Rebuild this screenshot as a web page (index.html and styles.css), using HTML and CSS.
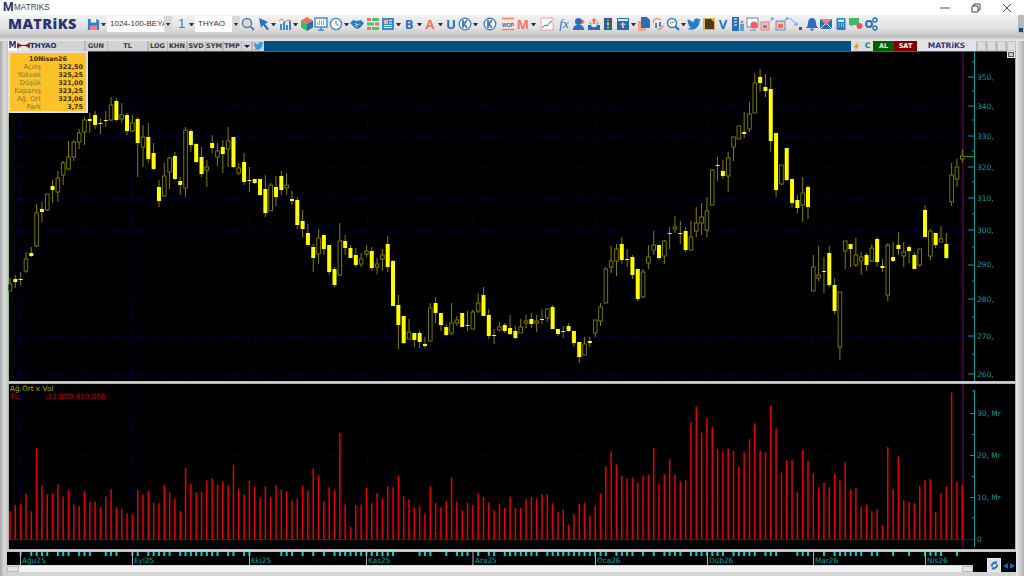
FILE: index.html
```html
<!DOCTYPE html>
<html lang="tr">
<head>
<meta charset="utf-8">
<title>MATRIKS</title>
<link rel="stylesheet" href="styles.css">
</head>
<body>
<header class="titlebar">
  <span class="app-m">M</span>
  <span class="app-name">MATRIKS</span>
  <div class="winbtns">
    <svg viewBox="0 0 10 10"><path d="M0 5h10" stroke="#555" fill="none"/></svg>
    <svg viewBox="0 0 10 10"><path d="M1 3h6v6H1zM3 3V1h6v6H7" stroke="#444" fill="none"/></svg>
    <svg viewBox="0 0 10 10"><path d="M1 1l8 8M9 1l-8 8" stroke="#444" fill="none"/></svg>
  </div>
</header>

<nav class="toolbar">
  <span class="logo">MATRiKS</span>
  <svg class="ti save" viewBox="0 0 14 14"><path d="M1 1h10l2 2v10H1z" fill="#2a7fd0"/><rect x="4" y="1" width="6" height="4" fill="#e9eef5"/><rect x="3" y="8" width="8" height="5" fill="#f08080"/></svg>
  <i class="dd m1"></i>
  <div class="combo wide"><span>1024-100-BEYA</span><b></b></div>
  <span class="one">1</span>
  <i class="dd m3"></i>
  <div class="combo sym"><span>THYAO</span><b></b></div>

  <svg class="ti m1" viewBox="0 0 14 14"><circle cx="6" cy="6" r="4.6" fill="#f6cfc4" stroke="#3a8ad0" stroke-width="1.5"/><path d="M9.5 9.5l3.5 3.5" stroke="#3a8ad0" stroke-width="2"/></svg>
  <svg class="ti m2" viewBox="0 0 14 14"><path d="M2 1l9 4-3 2 4 5-2 1-4-5-2 3z" fill="#2a6fb8"/></svg>
  <i class="dd m0"></i>
  <svg class="ti m2" viewBox="0 0 14 14"><path d="M2 13V7h2v6zM5 13V5h2v8zM8 13V8h2v5zM11 13V4h2v9z" fill="#3a8ad0"/><path d="M1 4l3-2 3 3 3-2 3 1" stroke="#e87060" fill="none"/></svg>
  <i class="dd m1"></i>
  <svg class="ti m2" viewBox="0 0 14 14"><path d="M7 0l6 3.5L7 7 1 3.5z" fill="#f0705a"/><path d="M1 3.5L7 7v7l-6-3.5z" fill="#3ab870"/><path d="M13 3.5L7 7v7l6-3.5z" fill="#2a6fb8"/></svg>
  <svg class="ti m0" viewBox="0 0 14 14"><rect x="1" y="1" width="12" height="9" fill="#fff" stroke="#3a8ad0" stroke-width="1.4"/><path d="M3 8V5h1v3zM5 8V3h1v5zM7 8V4h1v4zM9 8V3h1v5z" fill="#f09050"/><path d="M7 10v3M4 13h6" stroke="#3a8ad0" stroke-width="1.4"/></svg>
  <svg class="ti m1" viewBox="0 0 14 14"><circle cx="7" cy="7" r="5.6" fill="#fff" stroke="#3a8ad0" stroke-width="1.4"/><path d="M7 3.5V7l2.5 1.5" stroke="#3a8ad0" fill="none"/></svg>
  <i class="dd m1"></i>
  <svg class="ti m1" viewBox="0 0 14 14"><path d="M0 6l3-3 4 1 4-1 3 3-3 4-3 2-3-1-3-3z" fill="#2a7fc0"/><path d="M5 6l2 2 2-1M5 8l2 2" stroke="#cfe4f5" fill="none"/></svg>
  <svg class="ti m2" viewBox="0 0 14 14"><rect x="1" y="1" width="4" height="3" fill="#f07060"/><rect x="6" y="1" width="7" height="3" fill="#40c878"/><rect x="1" y="5.5" width="7" height="3" fill="#40c878"/><rect x="9" y="5.5" width="4" height="3" fill="#f07060"/><rect x="1" y="10" width="4" height="3" fill="#f07060"/><rect x="6" y="10" width="7" height="3" fill="#40c878"/></svg>
  <svg class="ti m1" viewBox="0 0 14 14"><rect x="1" y="1" width="12" height="12" fill="#3a8ad0"/><rect x="3" y="3" width="4" height="4" fill="#f6b0a0"/><path d="M8 3.5h3M8 6h3M3 8.500h8M3 10.500h8" stroke="#dcebf8"/></svg>
  <i class="dd m1"></i>
  <span class="tg blue m1">B</span>
  <i class="dd m1"></i>
  <span class="tg salmon m1">A</span>
  <i class="dd m1"></i>
  <span class="tg blue m1">U</span>
  <svg class="ti m0" viewBox="0 0 14 14"><circle cx="7" cy="7" r="5.8" fill="#fff" stroke="#3a78b8" stroke-width="1.3"/><path d="M5 3v8M9 3L6 7l3 4" stroke="#3a78b8" stroke-width="1.8" fill="none"/></svg>
  <i class="dd m1"></i>
  <svg class="ti m5" viewBox="0 0 14 14"><circle cx="7" cy="7" r="5.8" fill="#fff" stroke="#3a78b8" stroke-width="1.3"/><path d="M5 3v8M9 3L6 7l3 4" stroke="#3a78b8" stroke-width="1.8" fill="none"/></svg>
  <svg class="ti m4" viewBox="0 0 14 14"><rect x="1" y="1" width="12" height="12" fill="#fbe6e2"/><path d="M1 1.500h12M1 12.500h12" stroke="#f08070" stroke-width="1.400"/><text class="wop" x="7" y="9.500" text-anchor="middle">WOP</text></svg>
  <span class="tg salmon m1">M</span>
  <i class="dd m1"></i>
  <svg class="ti m4" viewBox="0 0 14 14"><rect x="1" y="1" width="12" height="12" fill="#fff" stroke="#f0a098"/><path d="M2 11l3-3 2 1 3-4 2-1" stroke="#2a7fc0" fill="none"/></svg>
  <span class="tg fx m3">fx</span>
  <svg class="ti m1" viewBox="0 0 14 14"><circle cx="6.500" cy="4.500" r="3.500" fill="#2a6fb8"/><path d="M1 13c0-4 2-5 5.500-5S12 9 12 13z" fill="#2a6fb8"/><path d="M10 2l3 3-3 2z" fill="#f07060"/></svg>
  <svg class="ti m1" viewBox="0 0 14 14"><path d="M1 8h3l1 2h4l1-2h3v5H1z" fill="#2a6fb8"/><path d="M7 1l3 3H8v3H6V4H4z" fill="#f07060"/><path d="M3 4v3h2M11 4v3H9" stroke="#40c878" fill="none"/></svg>
  <svg class="ti m0" viewBox="0 0 14 14"><rect x="3" y="1" width="8" height="12" fill="#1f5f9f"/><circle cx="7" cy="3.500" r="1.400" fill="#f05050"/><circle cx="7" cy="7" r="1.400" fill="#f5c020"/><circle cx="7" cy="10.500" r="1.400" fill="#40c060"/></svg>
  <svg class="ti m1" viewBox="0 0 14 14"><rect x="1" y="1" width="12" height="12" fill="#1f6fb0"/><rect x="2" y="2" width="10" height="2" fill="#dcebf8"/><path d="M7 5l3 3H8v3H6V8H4z" fill="#f6b0a0"/></svg>
  <i class="dd m1"></i>
  <svg class="ti m1" viewBox="0 0 14 14"><path d="M1 4h8v10H1z" fill="#f6a090"/><path d="M4 0h6l3 3v8H4z" fill="#2a6fb8"/></svg>
  <svg class="ti m0" viewBox="0 0 14 14"><path d="M2 6c0-3 3-5 6-4l2 1M12 8c0 3-3 5-6 4" stroke="#f08070" stroke-width="1.300" fill="none"/><path d="M5 6v5M9 5v5" stroke="#2a6fb8" stroke-width="1.600"/></svg>
  <svg class="ti m1" viewBox="0 0 14 14"><circle cx="6" cy="6" r="4.500" fill="#fff" stroke="#2a7fc0" stroke-width="1.500"/><path d="M4 7l1.500-2L7 6l2-2" stroke="#e08050" fill="none"/><path d="M9.500 9.500l3.500 3.500" stroke="#2a6fb8" stroke-width="2"/></svg>
  <i class="dd m1"></i>
  <svg class="ti m1" viewBox="0 0 24 24"><path fill="#2a7fc8" d="M23.950 4.570a10 10 0 01-2.820.770 4.960 4.960 0 002.160-2.720c-.950.550-2 .950-3.120 1.180a4.920 4.920 0 00-8.380 4.480C7.690 8.090 4.070 6.130 1.640 3.160a4.900 4.900 0 00-.660 2.470c0 1.710.870 3.210 2.190 4.100a4.900 4.900 0 01-2.230-.610v.060a4.920 4.920 0 003.950 4.830 5 5 0 01-2.210.080 4.940 4.940 0 004.600 3.420A9.870 9.870 0 010 19.540a14 14 0 007.560 2.210c9.050 0 14-7.500 14-13.980 0-.210 0-.420-.020-.630a9.940 9.940 0 002.460-2.550z"/></svg>
  <svg class="ti m1" viewBox="0 0 14 14"><rect x="1" y="1" width="12" height="12" fill="#e8b050"/><path d="M3 2h6l3 3v7H3z" fill="#4a3a20"/></svg>
  <span class="tg blue m0">V</span>
  <svg class="ti m1" viewBox="0 0 14 14"><path d="M1 0h7v14H1z" fill="#2a6fb8"/><path d="M3 2h3M3 5h3M3 8h3" stroke="#fff"/><path d="M9 7h4v7H9z" fill="#5aa0d8"/><circle cx="11" cy="5" r="1.500" fill="#f07060"/></svg>
  <svg class="ti m1" viewBox="0 0 14 14"><rect x="1" y="1" width="11" height="9" fill="#fff" stroke="#5a90c8"/><circle cx="8" cy="8" r="3.600" fill="#f06060"/><path d="M4 13h6" stroke="#5a90c8"/></svg>
  <svg class="ti m0" viewBox="0 0 14 14"><rect x="1" y="5" width="8" height="8" fill="#f6c0b8" stroke="#e08080"/><rect x="3" y="8" width="4" height="3" fill="#5a90c8"/><path d="M10 4l3-3M11 1h2v2" stroke="#5a90c8" fill="none"/></svg>
  <svg class="ti m1" viewBox="0 0 14 14"><rect x="1" y="4" width="9" height="9" fill="#f6c0b8" stroke="#5a90c8"/><rect x="3" y="7" width="5" height="4" fill="#e07070"/><path d="M10 3l3-2M11 1h2v2" stroke="#5a90c8" fill="none"/></svg>
  <svg class="ti m0" viewBox="0 0 14 14"><path d="M1 1l7 7M5 8h3V5" stroke="#5aa0d8" fill="none"/><rect x="10" y="10" width="3" height="3" fill="#1f5f9f"/></svg>
  <svg class="ti m2" viewBox="0 0 14 14"><path d="M7 1c3 0 4 3 4 5s1 4 2 5H1c1-1 2-3 2-5s1-5 4-5z" fill="#2a6fb8"/><rect x="5.500" y="11.500" width="3" height="2" fill="#2a6fb8"/></svg>
  <svg class="ti m0" viewBox="0 0 14 14"><rect x="1" y="2" width="12" height="10" fill="#2a6fb8"/><path d="M1 2l6 6 6-6z" fill="#f08080"/><path d="M1 12l5-5M13 12L8 7" stroke="#dcebf8"/></svg>
  <svg class="ti m1" viewBox="0 0 14 14"><rect x="2.500" y="1" width="9" height="12" rx="1" fill="#2a7fc0"/><rect x="4" y="2.500" width="6" height="2.500" fill="#dcebf8"/><path d="M4.500 7h1M7 7h1M9 7h1M4.500 9h1M7 9h1M9 9h1" stroke="#dcebf8"/></svg>
  <svg class="ti m1" viewBox="0 0 14 14"><path d="M0 1h10v7H4l-2 2V8H0z" fill="#40b868"/><circle cx="10.500" cy="9" r="3" fill="#f05060"/></svg>
  <svg class="ti m1" viewBox="0 0 14 14"><circle cx="5" cy="7" r="3" fill="none" stroke="#2a6fb8" stroke-width="2"/><circle cx="11" cy="3" r="2" fill="none" stroke="#2a6fb8" stroke-width="1.400"/><circle cx="11" cy="11" r="2" fill="none" stroke="#2a6fb8" stroke-width="1.400"/></svg>
  <div class="grip"><i></i></div>
</nav>

<main class="frame">
  <div class="tabs">
    <span class="t-m">M</span>
    <svg class="t-flag" viewBox="0 0 12 9"><rect width="12" height="9" fill="#e8e8f0"/><path d="M0 1l5 3-5 3zM12 1L7 4l5 3z" fill="#c03030"/><path d="M0 4h12" stroke="#203080"/></svg>
    <span class="t sym">THYAO</span>
    <span class="t gun">GUN</span>
    <span class="t tl">TL</span>
    <span class="t log">LOG</span>
    <span class="t khn">KHN</span>
    <span class="t svd">SVD</span>
    <span class="t sm">SYM</span>
    <span class="t tmp">TMP</span>
    <span class="t caret"><i></i></span>
    <svg class="t-tw" viewBox="0 0 24 24"><path fill="#3a9ad8" d="M23.950 4.570a10 10 0 01-2.820.770 4.960 4.960 0 002.160-2.720c-.950.550-2 .950-3.120 1.180a4.920 4.920 0 00-8.380 4.480C7.690 8.090 4.070 6.130 1.640 3.160a4.900 4.900 0 00-.660 2.470c0 1.710.870 3.210 2.190 4.100a4.900 4.900 0 01-2.230-.610v.060a4.920 4.920 0 003.950 4.830 5 5 0 01-2.210.080 4.940 4.940 0 004.600 3.420A9.870 9.870 0 010 19.540a14 14 0 007.560 2.210c9.050 0 14-7.500 14-13.980 0-.210 0-.420-.020-.630a9.940 9.940 0 002.460-2.550z"/></svg>
    <span class="t-blue"></span>
    <span class="t-ic"><svg viewBox="0 0 10 10"><path d="M6 0L2 6h2.500L3 10l5-6H5.500z" fill="#e09020"/></svg></span>
    <span class="t-ic c">C</span>
    <span class="al">AL</span>
    <span class="sat">SAT</span>
    <span class="mt">MATRiKS</span>
    <span class="wb"></span><span class="wb"></span><span class="wb"></span><span class="wb"></span>
  </div>

  <section class="pane top">
    <svg class="chart" viewBox="8 52 1008 329" preserveAspectRatio="none">
      <g class="grid">
        <path d="M9 77H974M9 106H974M9 136H974M9 167H974M9 198H974M9 230H974M9 265H974M9 299H974M9 336H974M9 374H974"/>
        <path d="M20 52V381M132 52V381M249.500 52V381M367 52V381M473 52V381M595 52V381M707 52V381M813 52V381M925.500 52V381"/>
      </g>
      <rect class="purple" x="962" y="51" width="2" height="330"/>
      <path class="last" d="M965 156.500H974"/>
      <g id="candles"></g>
      <path class="axis" d="M974.500 51V381M968 77H974M968 106H974M968 136H974M968 167H974M968 198H974M968 230H974M968 265H974M968 299H974M968 336H974M968 374H974M972 62H974M972 91H974M972 120H974M972 151H974M972 182H974M972 214H974M972 247H974M972 281H974M972 317H974M972 354H974"/>
      <g class="lbl">
        <text x="977" y="80">350,</text><text x="977" y="109">340,</text><text x="977" y="139">330,</text><text x="977" y="170">320,</text><text x="977" y="201">310,</text>
        <text x="977" y="233">300,</text><text x="977" y="267">290,</text><text x="977" y="302">280,</text><text x="977" y="339">270,</text><text x="977" y="377">260,</text>
      </g>
    </svg>
    <aside class="info">
      <h4>10Nisan26</h4>
      <dl>
        <dt>Açılış</dt><dd>322,50</dd>
        <dt>Yüksek</dt><dd>325,25</dd>
        <dt>Düşük</dt><dd>321,00</dd>
        <dt>Kapanış</dt><dd>323,25</dd>
        <dt>Ağ. Ort</dt><dd>323,06</dd>
        <dt>Fark</dt><dd>3,75</dd>
      </dl>
    </aside>
    <span class="corner"></span>
  </section>

  <section class="pane low">
    <svg class="chart" viewBox="8 384 1008 165" preserveAspectRatio="none">
      <g class="grid">
        <path d="M9 413.500H974M9 455.500H974M9 497.500H974"/>
        <path d="M20 385V548M132 385V548M249.500 385V548M367 385V548M473 385V548M595 385V548M707 385V548M813 385V548M925.500 385V548"/>
      </g>
      <rect class="purple" x="962" y="384" width="2" height="165"/>
      <path class="base" d="M9 539.500H974"/>
      <g id="volume"></g>
      <path class="axis" d="M974.500 390V547M970 413.500H974M970 455.500H974M970 497.500H974M972 391H974M972 434.500H974M972 476.500H974M972 518H974"/>
      <g class="lbl">
        <text x="977" y="416">30, Mr</text><text x="977" y="458">20, Mr</text><text x="977" y="500">10, Mr</text><text x="977" y="542">0</text>
      </g>
    </svg>
    <div class="legend">
      <div class="l1">Ağ.Ort x Vol</div>
      <div class="l2"><span>TL</span><span>:12.800.410.000</span></div>
    </div>
  </section>

  <footer class="foot">
    <div class="foot-l">
      <svg class="times" viewBox="7 551 966 13" preserveAspectRatio="none">
        <g id="ticks"></g>
        <path class="mline" d="M20.500 551V564M132.500 551V564M249.500 551V564M366.500 551V564M473 551V564M595.500 551V564M707.500 551V564M813.500 551V564M925.500 551V564"/>
        <g class="tlbl">
          <text x="22" y="562">Ağu25</text><text x="134" y="562">Eyl25</text><text x="251" y="562">Eki25</text>
          <text x="368" y="562">Kas25</text><text x="475" y="562">Ara25</text><text x="597" y="562">Oca26</text>
          <text x="709" y="562">Dub26</text><text x="815" y="562">Mar26</text><text x="927" y="562">Nis26</text>
        </g>
      </svg>
      <div class="hscroll">
        <span class="sb left"></span>
        <span class="track"></span>
        <span class="sb right"></span>
      </div>
    </div>
    <div class="foot-r">
      <span class="refresh"><svg viewBox="0 0 12 12"><path d="M2 7c0-3 2-5 5-5l-1-1 3 1-1 3-1-1c-2 0-3 1-3 3zM10 5c0 3-2 5-5 5l1 1-3-1 1-3 1 1c2 0 3-1 3-3z" fill="#2a6fb8"/></svg></span>
      <i class="arr l"></i><i class="arr r"></i>
    </div>
  </footer>
</main>
<script src="chart.js"></script>
</body>
</html>
```
FILE: styles.css
```css
* { box-sizing: border-box; }
html, body { margin: 0; padding: 0; }
body {
  width: 1024px; height: 576px; overflow: hidden;
  background: #d4d4d4;
  font-family: "DejaVu Sans", sans-serif;
  display: flex; flex-direction: column;
}
i { display: block; font-style: normal; }

/* title bar */
.titlebar { height: 15px; flex: none; background: #fff; display: flex; align-items: center; position: relative; }
.app-m { font: bold 12px/15px "Roboto", sans-serif; color: #25306c; margin-left: 3px; width: 11px; flex: none; overflow: hidden; }
.app-name { font: 8.2px/15px "Liberation Sans", sans-serif; color: #444; margin-left: 0; }
.winbtns { margin-left: auto; display: flex; gap: 21px; margin-right: 12px; margin-top: 1px; }
.winbtns svg { width: 10px; height: 10px; display: block; }

/* toolbar */
.toolbar {
  height: 18px; flex: none; display: flex; align-items: center;
  background: linear-gradient(#f2f2f2, #e2e2e2 70%, #cfcfcf);
  padding-left: 8px; position: relative;
}
.logo { font: 800 14.500px/18px "Open Sans", sans-serif; color: #2a3570; letter-spacing: .4px; width: 79px; flex: none; }
.ti { width: 14px; height: 14px; flex: none; display: block; }
.save { width: 13px; height: 13px; }
.dd { width: 5px; flex: none; height: 0; border-left: 2.500px solid transparent; border-right: 2.500px solid transparent; border-top: 3px solid #333; }
.m0 { margin-left: 0; } .m1 { margin-left: 1px; } .m2 { margin-left: 2px; }
.m3 { margin-left: 3px; } .m4 { margin-left: 4px; } .m5 { margin-left: 5px; }
.combo { height: 16px; background: #fff; display: flex; justify-content: space-between; flex: none; margin-left: 1px; overflow: hidden; }
.combo span { font: 8px/16px "Liberation Sans", sans-serif; color: #333; padding-left: 3px; white-space: nowrap; overflow: hidden; }
.combo b { width: 8px; flex: none; background: #d8d8d8 ; position: relative; }
.combo b::after { content: ""; position: absolute; left: 1.500px; top: 7px; border-left: 2.500px solid transparent; border-right: 2.500px solid transparent; border-top: 3px solid #222; }
.wide { width: 65px; }
.sym { width: 45px; }
.one { font: 13px/18px "Liberation Sans", sans-serif; color: #2a7fd0; width: 8px; margin-left: 6px; flex: none; }
.tg { width: 14px; flex: none; text-align: center; font: bold 13px/18px "Open Sans", sans-serif; }
.blue { color: #2a70c0; }
.salmon { color: #f07868; }
.fx { font: italic 13px/18px "Liberation Serif", serif; color: #2a70b8; }
.wop { font: bold 5px "Liberation Sans", sans-serif; fill: #2a5fa8; }
.grip { margin-left: auto; width: 6px; height: 18px; background: #b8b8b8; display: flex; align-items: flex-end; justify-content: center; }
.grip i { width: 4px; height: 4px; background: #204870; margin-bottom: 1px; }

/* frame */
.frame {
  flex: 1; min-height: 0; display: flex; flex-direction: column;
  padding: 8px 8px 5px 8px;
  background: linear-gradient(#d0d0d0, #bdbdbd 4px, #e4e4e4 7px) top/100% 8px no-repeat,
              linear-gradient(90deg, #a8a8a8, #d8d8d8 50%, #c8c8c8) left/8px 100% no-repeat,
              linear-gradient(90deg, #e8e8e8, #b0b0b0) right/8px 100% no-repeat,
              #d4d4d4;
}

/* tabs */
.tabs { height: 10px; flex: none; display: flex; align-items: stretch; background: #b8b8b8; }
.tabs > * { flex: none; }
.t { background: #d2d2d2; font: bold 6.500px/10px "DejaVu Sans", sans-serif; color: #3a3a3a; text-align: center; margin-right: 1.500px; }
.t-m { width: 9px; background: #fff; font: bold 8px/10px "DejaVu Sans", sans-serif; color: #25306c; text-align: center; }
.t-flag { width: 13px; height: 10px; display: block; }
.t.sym { width: 54px; text-align: left; font-size: 7px; color: #203060; margin: 0 1.500px 0 0; height: 10px; background: #d2d2d2; }
.t.gun { width: 21px; } .t.tl { width: 39px; } .t.log { width: 18px; } .t.khn { width: 18px; }
.t.svd { width: 17px; } .t.sm { width: 16px; } .t.tmp { width: 17px; }
.t.caret { width: 9px; position: relative; }
.t.caret i { position: absolute; left: 2px; top: 4px; border-left: 3px solid transparent; border-right: 3px solid transparent; border-top: 3px solid #181860; }
.t-tw { width: 11px; height: 10px; display: block; background: #d2d2d2; }
.t-blue { flex: 1 !important; background: #005080; }
.t-ic { width: 11px; background: #dcdcdc; display: flex; align-items: center; justify-content: center; }
.t-ic svg { width: 9px; height: 9px; display: block; }
.t-ic.c { font: bold 7.500px/10px "DejaVu Sans", sans-serif; color: #108060; }
.al, .sat { font: bold 6.500px/10px "DejaVu Sans", sans-serif; color: #d8f0d8; text-align: center; width: 21px; }
.al { background: #006000; }
.sat { background: #800000; color: #fff; width: 23px; }
.mt { width: 59px; background: #e2e2ea; font: bold 7.500px/10px "DejaVu Sans", sans-serif; color: #35357e; text-align: center; }
.wb { width: 9px; margin-left: 1px; background: #dcdcdc; border: 1px solid #c4c4c4; }

/* panes */
.pane { position: relative; background: #000; flex: none; }
.pane.top { height: 331px; border: 1px solid #88b088; border-color: #4a6a2a #90c090 #a0d0a0 #90c090; }
.pane.low { height: 167px; margin-top: 1px; border: 1px solid #b0b0b0; }
.chart { position: absolute; left: -1px; top: 0; width: 1008px; height: 100%; display: block; }
.grid path { stroke: #00005a; stroke-width: 1; stroke-dasharray: 1.200 1.900; fill: none; shape-rendering: crispEdges; }
.purple { fill: #3c003c; }
.last { stroke: #00a000; fill: none; }
.base { stroke: #004000; fill: none; }
.axis { stroke: #0a9a9a; fill: none; }
.lbl text { font: 7.500px "DejaVu Sans", sans-serif; fill: #0a9a9a; }
.wick { stroke: #808000; stroke-width: 1; }
.body { fill: #ffff00; }
.hollow { fill: #000; stroke: #808000; stroke-width: .9; }
.vol { fill: #e80000; }

.info {
  position: absolute; left: -1px; top: -1px; width: 80px; height: 62px;
  background: #fdc228; border: 2px solid #e0e0e0;
  padding-top: 1.500px; color: #3a3000;
}
.info h4 { margin: 0; font: bold 6.400px/8px "DejaVu Sans", sans-serif; text-align: center; color: #3a3000; }
.info dl { margin: 0; display: grid; grid-template-columns: 31px 42px; column-gap: 0; }
.info dt { font: 6.800px/8px "DejaVu Sans", sans-serif; color: #8a7430; text-align: right; }
.info dd { margin: 0; font: bold 6.400px/8px "DejaVu Sans", sans-serif; color: #3a3000; text-align: right; }
.corner { position: absolute; right: 0; top: -1px; width: 8px; height: 7px; background: #c8c8c8; border: 1.500px solid #e8e8e8; box-shadow: inset 0 0 0 1px #555; }

.legend { position: absolute; left: 1px; top: 1px; font: 7.300px/8px "DejaVu Sans", sans-serif; }
.l1 { color: #b0b000; }
.l2 { color: #d80000; display: flex; }
.l2 span:first-child { width: 35px; }
.l2 span:last-child { color: #c00000; }

/* footer */
.foot { height: 21px; flex: none; margin: 1px 0 0 -1px; display: flex; background: #000; border-top: 1px solid #c0c0c0; }
.foot-l { width: 966px; flex: none; display: flex; flex-direction: column; }
.times { display: block; width: 966px; height: 13px; flex: none; }
.mline { stroke: #b0b0b0; fill: none; }
.tlbl text { font: 7.300px "DejaVu Sans", sans-serif; fill: #00a0a0; }
.tick { fill: #00d0d0; }
.hscroll { height: 7px; flex: none; display: flex; background: #f2f2f2; border-top: 1px solid #d8d8d8; }
.sb { width: 12px; background: #e4e4e4; border: 1px solid #bbb; }
.sb.right { width: 11px; }
.track { flex: 1; }
.foot-r { flex: 1; display: flex; align-items: flex-end; padding: 0 1px 0 14px; }
.refresh { width: 14px; height: 14px; background: #d8e0e8; border: 1px solid #eee; display: flex; align-items: center; justify-content: center; }
.refresh svg { width: 11px; height: 11px; display: block; }
.arr { width: 0; height: 0; margin-bottom: 3px; border-top: 3.500px solid transparent; border-bottom: 3.500px solid transparent; }
.arr.l { margin-left: 2px; border-right: 5px solid #2060c0; }
.arr.r { margin-left: 2px; border-left: 5px solid #2060c0; }
```
FILE: chart.js
```js
// hi, body top, body bottom, lo, filled (1) / hollow (0); y in page pixels
var C = [
[278,284,291,291,0],[275,279,282,288,1],[272,279,280,285,1],[252,259,271,273,0],[247,253,256,257,1],[204,213,246,247,0],[202,209,212,222,1],[194,194,210,211,0],[180,186,190,203,1],[171,178,192,202,0],
[161,163,175,185,0],[141,157,169,170,0],[140,142,157,161,0],[129,133,142,149,0],[117,120,132,145,0],[113,119,121,133,1],[111,115,125,129,1],[119,123,124,134,1],[111,120,121,127,1],[97,105,120,121,0],
[98,101,120,121,1],[103,115,119,123,0],[113,115,131,135,1],[115,123,131,132,0],[117,119,143,177,1],[125,137,147,167,0],[123,137,159,163,1],[143,153,169,170,1],[180,187,201,207,1],[163,176,196,197,0],
[157,158,172,189,0],[152,156,179,180,1],[177,181,185,195,1],[127,130,188,197,0],[129,131,145,152,1],[143,144,162,163,1],[147,157,174,177,1],[160,167,170,187,0],[135,143,148,153,1],[143,151,157,166,0],
[140,147,154,173,1],[127,141,149,167,0],[137,137,167,168,1],[163,168,173,175,0],[153,162,182,185,1],[167,180,181,192,1],[179,179,183,184,1],[179,179,195,196,1],[175,189,213,217,1],[183,185,211,211,0],
[176,187,197,206,1],[171,176,190,195,1],[173,185,188,195,0],[191,199,201,205,1],[197,200,225,229,1],[210,221,229,237,1],[224,233,245,245,1],[244,247,258,272,1],[229,238,254,264,0],[235,235,249,255,1],
[245,245,272,275,1],[267,269,285,287,1],[223,241,275,276,0],[235,241,248,255,1],[245,248,258,258,1],[248,255,265,267,1],[253,259,264,267,0],[245,251,254,257,0],[247,251,268,271,1],[258,264,267,274,0],
[249,255,259,271,0],[236,244,267,272,1],[260,261,306,306,1],[295,305,325,349,1],[316,316,343,344,1],[319,332,339,339,0],[333,333,340,347,1],[330,333,342,348,1],[337,344,346,348,1],[303,308,341,341,0],
[297,303,313,323,1],[313,313,325,331,1],[324,327,335,336,1],[303,323,333,335,0],[316,320,323,326,0],[313,313,327,327,1],[311,325,326,331,1],[310,312,329,329,0],[293,303,311,313,0],[287,295,316,316,1],
[309,315,336,339,1],[329,335,336,344,1],[322,327,330,331,0],[323,325,331,333,1],[315,328,334,335,1],[326,331,338,339,1],[319,327,333,333,0],[315,321,323,328,0],[313,319,324,328,1],[315,321,323,332,0],
[309,319,320,324,1],[309,309,318,322,0],[305,307,329,329,1],[329,329,334,336,1],[326,331,332,338,1],[323,326,331,332,1],[331,331,343,347,1],[342,342,357,363,1],[337,344,355,355,0],[337,341,343,347,1],
[320,320,333,337,0],[303,307,321,326,0],[267,269,303,303,0],[246,261,267,273,0],[244,249,261,276,0],[237,244,260,264,1],[249,259,260,267,1],[255,257,275,279,1],[269,269,299,301,1],[269,272,297,298,0],
[245,257,263,269,0],[231,245,250,255,0],[245,245,258,260,1],[240,241,256,264,0],[227,233,234,249,1],[216,227,229,233,0],[221,233,234,244,1],[227,231,250,252,1],[221,237,250,250,0],[207,223,231,237,0],
[203,217,223,235,0],[197,211,230,237,0],[169,170,205,205,0],[157,165,166,181,1],[160,171,176,179,1],[152,158,176,192,0],[137,137,147,161,0],[126,126,139,139,0],[112,132,134,138,1],[102,114,129,132,0],
[73,83,113,113,0],[69,77,83,92,1],[74,87,91,97,1],[77,89,141,152,1],[133,133,190,197,1],[165,165,184,185,0],[148,148,180,181,1],[179,179,203,207,1],[195,200,208,213,1],[177,193,205,222,0],
[185,187,207,219,1],[255,267,291,291,0],[246,275,278,281,0],[257,271,272,293,1],[246,253,285,287,1],[278,285,311,314,1],[292,292,347,360,0],[241,241,251,269,0],[244,244,249,267,1],[238,255,265,267,0],
[252,257,261,275,0],[253,255,265,271,1],[244,248,261,262,0],[237,239,262,267,1],[259,266,268,272,1],[243,245,295,301,0],[242,257,261,262,1],[232,245,249,255,1],[242,252,256,267,0],[245,247,251,263,1],
[252,255,269,269,1],[249,249,265,267,0],[205,210,237,237,1],[229,231,256,260,0],[233,233,245,248,1],[226,239,242,242,0],[233,244,258,259,1],[163,175,202,206,0],[159,167,179,187,0],[149,156,159,163,0]
];
// volume bar heights, in thirds of a pixel
var V = [85,104,107,137,85,273,161,135,139,165,129,149,105,101,145,113,113,99,129,151,97,91,79,77,149,135,147,111,109,163,141,123,85,215,167,141,143,177,183,165,175,163,223,153,135,177,159,125,159,127,163,149,145,117,123,
161,147,213,193,115,157,149,319,105,39,103,105,155,109,139,123,159,157,191,129,121,97,101,77,159,109,97,115,187,113,87,111,103,137,127,111,87,107,95,129,95,95,121,127,123,135,135,109,83,91,45,77,107,111,71,101,137,
219,263,225,191,183,185,171,191,195,275,167,197,241,195,175,179,351,399,321,365,337,271,263,273,265,219,261,301,349,267,263,403,333,201,237,239,143,269,237,199,157,
171,157,199,177,231,151,155,97,105,85,91,43,277,151,249,117,113,109,161,179,181,83,139,159,441,173,163];
var T = [2,4,5,6,7,9,10,11,13,14,15,18,19,20,23,24,26,27,28,29,30,32,33,34,35,36,37,38,39,41,42,44,45,51,52,53,55,57,59,61,62,63,64,65,66,67,68,69,70,71,72,77,78,79,82,84,85,86,88,90,91,93,94,95,96,97,98,99,101,102,103,104,105,106,107,108,109,110,111,112,114,115,116,117,119,121,123,124,125,126,128,129,130,131,132,133,134,136,137,138,139,140,142,143,144,148,149,150,153,155,156,157,158,159,160,162,163,166,169,172,173,174,175,178];

var NS = "http://www.w3.org/2000/svg";
function el(parent, name, cls, attrs) {
  var e = document.createElementNS(NS, name);
  e.setAttribute("class", cls);
  for (var k in attrs) e.setAttribute(k, attrs[k]);
  parent.appendChild(e);
}
function X(i) { return 10 + 5.32 * i; }

var cg = document.getElementById("candles");
C.forEach(function (c, i) {
  var x = X(i);
  el(cg, "line", "wick", { x1: x, x2: x, y1: c[0], y2: c[3] });
  var h = Math.max(c[2] - c[1], 1);
  if (c[4]) el(cg, "rect", "body", { x: x - 2, y: c[1], width: 4, height: h });
  else el(cg, "rect", "hollow", { x: x - 1.8, y: c[1], width: 3.6, height: h });
});

var vg = document.getElementById("volume");
V.forEach(function (v, i) {
  var h = v / 3;
  el(vg, "rect", "vol", { x: X(i) - 0.75, y: 539.5 - h, width: 1.5, height: h });
});

var tg = document.getElementById("ticks");
T.forEach(function (i) {
  el(tg, "rect", "tick", { x: X(i) - 1, y: 551, width: 2, height: 4 });
});
```
